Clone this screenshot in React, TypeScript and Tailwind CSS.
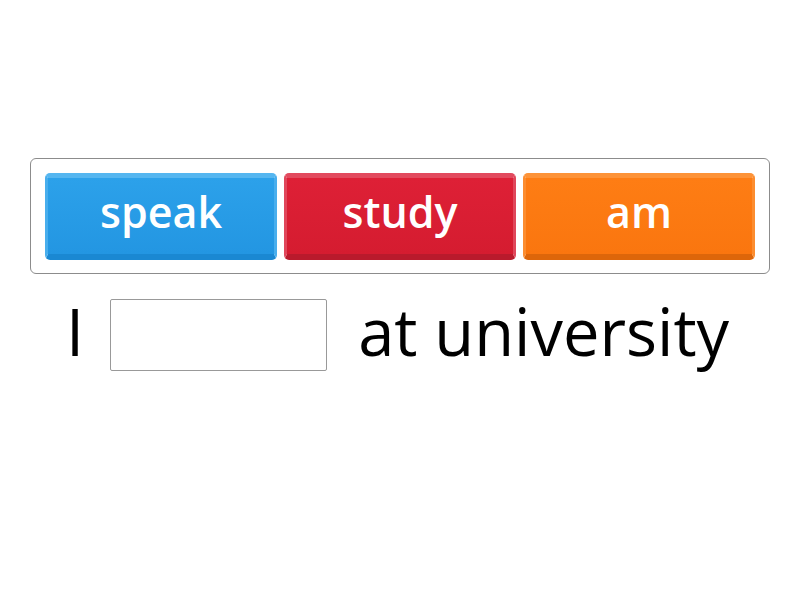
import React from "react";

const font = { fontFamily: '"Open Sans", "Noto Sans", sans-serif' };

function Tile({ label, cls }: { label: string; cls: string }) {
  return (
    <div
      className={`flex h-[87px] w-[232px] items-center justify-center rounded-[5px] border-t-[5px] border-x-[3px] border-b-[6px] pb-[9px] text-[43px] font-semibold text-white ${cls}`}
    >
      <span className="leading-none">{label}</span>
    </div>
  );
}

export default function App() {
  return (
    <div className="h-[600px] w-[800px] bg-white pt-[158px]" style={font}>
      <div className="mx-auto flex w-[740px] gap-[7px] rounded-[6px] border border-[#8c8c8c] px-[14px] pt-[14px] pb-[13px]">
        <Tile
          label="speak"
          cls="bg-gradient-to-b from-[#2ca1ea] to-[#2396e2] border-t-[#55b6f0] border-x-[#48aeed] border-b-[#1a88d2]"
        />
        <Tile
          label="study"
          cls="bg-gradient-to-b from-[#de2036] to-[#d51c30] border-t-[#e24a5e] border-x-[#e0475b] border-b-[#b91a2c]"
        />
        <Tile
          label="am"
          cls="bg-gradient-to-b from-[#fe7d14] to-[#fa760f] border-t-[#fd9338] border-x-[#fc8d30] border-b-[#dd660a]"
        />
      </div>
      <div className="mt-[9px] flex items-start pl-[66px] text-[65px] text-black">
        <span className="leading-normal">I</span>
        <div className="ml-[26px] mt-[16px] h-[72px] w-[217px] rounded-[2px] border border-[#999999] bg-white"></div>
        <span className="ml-[31px] leading-normal">at university</span>
      </div>
    </div>
  );
}
